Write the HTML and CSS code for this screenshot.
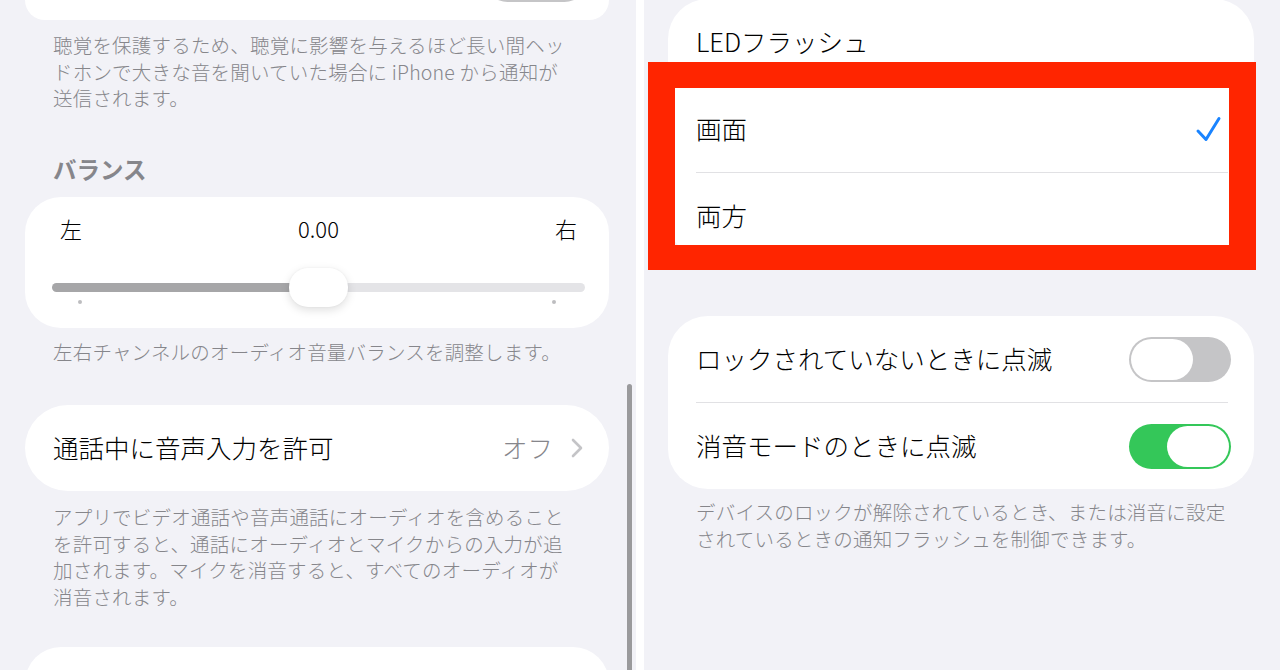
FILE: index.html
```html
<!DOCTYPE html>
<html lang="ja">
<head>
<meta charset="utf-8">
<title>設定</title>
<link rel="stylesheet" href="styles.css">
</head>
<body>
<div class="screen">
  <section class="panel panel-left">
    <div class="card card-top">
      <div class="toggle toggle-off toggle-peek"><span class="knob"></span></div>
    </div>
    <p class="desc desc-1">
      <span>聴覚を保護するため、聴覚に影響を与えるほど長い間ヘッ</span>
      <span>ドホンで大きな音を聞いていた場合に iPhone から通知が</span>
      <span>送信されます。</span>
    </p>
    <h3 class="group-title">バランス</h3>
    <div class="card balance">
      <div class="balance-labels">
        <span>左</span><span class="balance-value">0.00</span><span>右</span>
      </div>
      <div class="slider">
        <div class="track"><div class="track-fill" style="width:50%"></div><div class="track-rest"></div></div>
        <div class="thumb" style="left:50%"></div>
        <span class="tick tick-left"></span>
        <span class="tick tick-right"></span>
      </div>
    </div>
    <p class="desc desc-2">
      <span>左右チャンネルのオーディオ音量バランスを調整します。</span>
    </p>
    <div class="card pill-row">
      <span class="row-label">通話中に音声入力を許可</span>
      <span class="row-value">オフ</span>
      <svg class="chevron" width="12" height="20" viewBox="0 0 12 20"><path d="M2 2 L10 10 L2 18" fill="none" stroke="#c4c4c7" stroke-width="2.6" stroke-linecap="round" stroke-linejoin="round"/></svg>
    </div>
    <p class="desc desc-3">
      <span>アプリでビデオ通話や音声通話にオーディオを含めること</span>
      <span>を許可すると、通話にオーディオとマイクからの入力が追</span>
      <span>加されます。マイクを消音すると、すべてのオーディオが</span>
      <span>消音されます。</span>
    </p>
    <div class="card card-bottom"></div>
    <div class="scrollbar"></div>
  </section>

  <div class="divider"></div>

  <section class="panel panel-right">
    <div class="card list-card card-led">
      <div class="row"><span class="row-label">LEDフラッシュ</span></div>
      <div class="sep"></div>
      <div class="row">
        <span class="row-label">画面</span>
        <svg class="check" width="27" height="26" viewBox="0 0 27 26"><path d="M3 15 L11 23.5 L24 2.5" fill="none" stroke="#1a84ff" stroke-width="3" stroke-linecap="round" stroke-linejoin="round"/></svg>
      </div>
      <div class="sep"></div>
      <div class="row"><span class="row-label">両方</span></div>
    </div>
    <div class="highlight"></div>

    <div class="card list-card card-toggles">
      <div class="row">
        <span class="row-label">ロックされていないときに点滅</span>
        <div class="toggle toggle-off"><span class="knob"></span></div>
      </div>
      <div class="sep"></div>
      <div class="row">
        <span class="row-label">消音モードのときに点滅</span>
        <div class="toggle toggle-on"><span class="knob"></span></div>
      </div>
    </div>
    <p class="desc desc-4">
      <span>デバイスのロックが解除されているとき、または消音に設定</span>
      <span>されているときの通知フラッシュを制御できます。</span>
    </p>
  </section>
</div>
</body>
</html>
```

FILE: styles.css
```css
* { box-sizing: border-box; }

html, body {
  margin: 0;
  padding: 0;
  width: 1280px;
  height: 670px;
  overflow: hidden;
  background: #ffffff;
  font-family: "Noto Sans CJK JP", "Noto Sans", sans-serif;
  font-weight: 300;
  color: #000;
}

.screen {
  display: flex;
  width: 1280px;
  height: 670px;
}

.panel {
  position: relative;
  width: 636px;
  height: 670px;
  background: #f2f2f7;
  overflow: hidden;
  display: flex;
  flex-direction: column;
}

.divider {
  width: 8px;
  background: #ffffff;
  flex: none;
}

.card {
  background: #ffffff;
  flex: none;
}

.panel-left .card {
  margin-left: 25px;
  width: 584px;
}

.panel-right .card {
  margin-left: 24px;
  width: 586px;
}

/* top card (only its bottom visible) */
.card-top {
  height: 20px;
  border-radius: 0 0 28px 28px;
  overflow: hidden;
  display: flex;
  justify-content: flex-end;
  padding-right: 22px;
}

.toggle-peek {
  margin-top: -43px;
}

/* descriptions */
.desc {
  margin: 0;
  padding-left: 53px;
  font-size: 19.5px;
  line-height: 26.5px;
  color: #86868b;
  letter-spacing: 0.2px;
}

.desc span {
  display: block;
  white-space: nowrap;
}

.desc-1 { margin-top: 12px; }
.desc-2 { margin-top: 11px; }
.desc-3 { margin-top: 13px; }
.desc-4 { margin-top: 10px; padding-left: 52px; }

.group-title {
  margin: 42px 0 0 0;
  padding-left: 53px;
  font-size: 23.5px;
  line-height: 30px;
  font-weight: 600;
  color: #86868b;
}

/* balance */
.balance {
  margin-top: 13px;
  height: 131px;
  border-radius: 36px;
  padding: 16px 24px 0 27px;
}

.balance-labels {
  display: flex;
  justify-content: space-between;
  padding: 0 8px 0 8px;
  font-size: 22px;
  line-height: 30px;
}

.slider {
  position: relative;
  margin-top: 25px;
  height: 40px;
}

.track {
  position: absolute;
  left: 0;
  right: 0;
  top: 15.5px;
  height: 9px;
  border-radius: 5px;
  overflow: hidden;
  display: flex;
}

.track-fill { background: #a6a6a8; }
.track-rest { flex: 1; background: #e4e4e7; }

.thumb {
  position: absolute;
  top: 0.5px;
  width: 59px;
  height: 39px;
  margin-left: -29.5px;
  border-radius: 19px;
  background: #ffffff;
  box-shadow: 0 3px 10px rgba(0, 0, 0, 0.13), 0 0 2px rgba(0, 0, 0, 0.06);
}

.tick {
  position: absolute;
  top: 32px;
  width: 4px;
  height: 4px;
  border-radius: 2px;
  background: #bdbdc0;
}

.tick-left { left: 26px; }
.tick-right { right: 29px; }

/* pill row */
.pill-row {
  margin-top: 40px;
  height: 86px;
  border-radius: 43px;
  display: flex;
  align-items: center;
  padding: 0 26px 3px 28px;
}

.row-label {
  font-size: 25.5px;
  line-height: 34px;
  white-space: nowrap;
}

.row-value {
  margin-left: auto;
  font-size: 25.5px;
  line-height: 34px;
  color: #86868b;
}

.chevron {
  margin-left: 18px;
  margin-top: 3px;
  flex: none;
}

.card-bottom {
  margin-top: 37px;
  height: 60px;
  border-radius: 36px 36px 0 0;
}

.scrollbar {
  position: absolute;
  left: 627px;
  top: 384px;
  width: 5px;
  height: 300px;
  border-radius: 3px;
  background: #9a9a9c;
}

/* right panel lists */
.list-card {
  border-radius: 40px;
  overflow: hidden;
}

.row {
  height: 86px;
  display: flex;
  align-items: center;
  padding: 0 23px 0 28px;
}

.row .row-label {
  padding-bottom: 3px;
}

.row .check {
  margin-left: auto;
  margin-right: 9px;
}

.sep {
  height: 1px;
  margin: 0 26px 0 28px;
  background: #e1e1e4;
}

.card-led {
  margin-top: -1px;
}

.card-toggles {
  margin-top: 57px;
}

.highlight {
  position: absolute;
  left: 4px;
  top: 62px;
  width: 608px;
  height: 208px;
  border-style: solid;
  border-color: #ff2500;
  border-width: 26px 27px 25px 27px;
}

/* toggles */
.toggle {
  position: relative;
  margin-left: auto;
  width: 102px;
  height: 45px;
  border-radius: 23px;
  flex: none;
}

.toggle .knob {
  position: absolute;
  top: 2px;
  width: 62px;
  height: 41px;
  border-radius: 21px;
  background: #ffffff;
}

.toggle-off { background: #c5c5c7; }
.toggle-off .knob { left: 2px; }

.toggle-on { background: #34c759; }
.toggle-on .knob { right: 2px; }
```
